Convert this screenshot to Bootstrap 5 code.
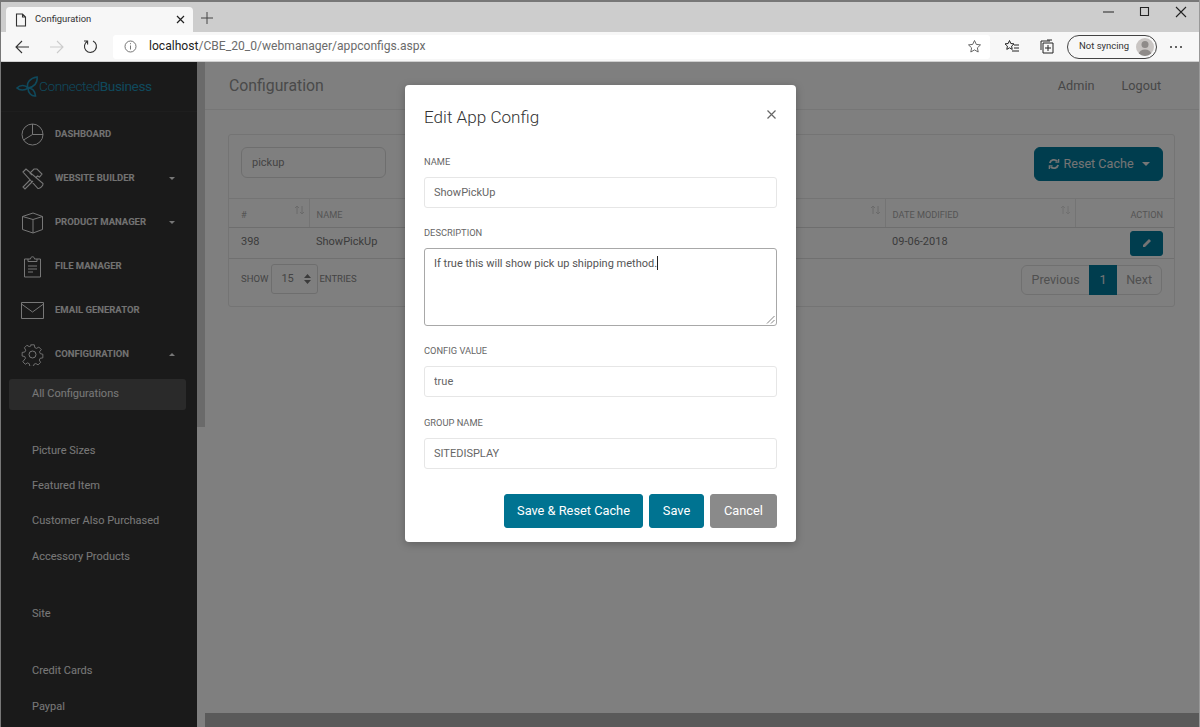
<!DOCTYPE html>
<html>
<head>
  <meta charset="utf-8">
  <meta name="viewport" content="width=device-width">
  <title>Configuration</title>
  <link href="https://cdn.jsdelivr.net/npm/bootstrap@5.3.3/dist/css/bootstrap.min.css" rel="stylesheet" type="text/css" />
  <style>
    html, body { height: 100%; overflow: hidden; }
    body { font-family: Roboto, "Liberation Sans", sans-serif; font-size: 11px; background: #fff; }
    .win { height: 727px; border-left: 1px solid #777; border-right: 1px solid #999; }

    /* browser frame */
    .tabstrip { height: 32px; background: #cdcdcd; border-top: 2px solid #777; padding: 5px 0 0 5px; }
    .tabitem { width: 187px; height: 25px; background: #f7f7f7; border-radius: 4px 4px 0 0; padding: 0 8px 0 9px; font-size: 9.4px; color: #333; }
    .tabplus { margin-left: 7px; }
    .winctl { gap: 22px; padding-right: 11px; margin-top: -2px; }
    .toolbar { height: 30px; background: #f7f7f7; padding: 0 0 0 14px; border-bottom: 1px solid #cfcfcf; }
    .navbtns { gap: 19px; width: 98px; }
    .addr { width: 877px; height: 24px; background: #fff; border-radius: 3px; padding: 0 8px 0 11px; font-size: 12.1px; }
    .addr b { font-weight: 400; color: #222; }
    .addr span { color: #6b6b6b; }
    .syncpill { width: 90px; height: 24px; border: 1px solid #444; border-radius: 12px; font-size: 9.5px; color: #333; padding: 0 2px 0 11px; margin-left: 12px; }
    .avatar { width: 18px; height: 18px; border-radius: 50%; background: #c9c5c3; overflow: hidden; }
    .favicon { margin-left: 14px; }
    .collicon { margin-left: 19px; }

    /* app under the backdrop */
    .appzone { height: 665px; }
    .sidepane { width: 196px; flex: none; background: #343434; color: #eee; }
    .brandrow { height: 50px; padding-left: 15px; border-bottom: 1px solid #3d3d3d; }
    .brandtxt { font-size: 13.7px; font-weight: 300; color: #1f93b9; letter-spacing: -.45px; }
    .brandtxt em { font-style: normal; font-weight: 400; }
    .menurow { height: 44px; padding: 0 22px 0 20px; font-size: 9.5px; font-weight: 700; color: #e4e4e4; text-transform: uppercase; }
    .menurow svg.mi { width: 23px; height: 23px; margin-right: 11px; flex: none; }
    .caretmark { width: 0; height: 0; border-left: 3px solid transparent; border-right: 3px solid transparent; border-top: 3px solid #eee; margin-left: auto; }
    .caretmark.up { border-top: 0; border-bottom: 3px solid #eee; }
    .caretbig { border-left-width: 4px; border-right-width: 4px; border-top-width: 4px; margin-left: 4px; }
    .subgroup { margin-bottom: 22px; }
    .subgroup.first { margin-bottom: 23.5px; }
    .subrow { height: 35.3px; padding-left: 31px; font-size: 11px; color: #f0f0f0; display: flex; align-items: center; }
    .subrow.current { margin: 3px 11px 0 8px; padding-left: 23px; height: 31px; background: #555; border-radius: 3px; }
    .scrolltrack { width: 8px; flex: none; background: #fff; }
    .scrollthumb { height: 365px; background: #d4d4d4; }
    .mainpane { background: #fff; min-width: 0; }
    .toprow { height: 48px; padding: 1px 38px 0 24px; border-bottom: 1px solid #ececec; color: #8e8e8e; font-size: 12.7px; flex: none; }
    .toprow h1 { font-size: 15.8px; font-weight: 400; margin: 0; color: #949494; }
    .topgap { gap: 27px; }
    .bodyzone { padding: 24px 24px 0 23px; }
    .sheet { height: 173px; border: 1px solid #e8e8e8; border-radius: 3px; background: #fff; }
    .sheettop { height: 63px; padding: 12px 11px 0 12px; }
    .searchbox { width: 145px; height: 31px; font-size: 11px; color: #888; border-color: #ddd; padding: 0 10px; background: #fff; }
    .btn-teal { background: #007a9c; border-color: #007a9c; color: #fff; }
    .resetbtn { width: 129px; height: 34px; font-size: 12.6px; padding: 0; color: #e8e8e8; }
    .datatable { table-layout: fixed; width: 100%; margin: 0; font-size: 11px; }
    .datatable th { height: 29px; font-size: 9.2px; font-weight: 400; color: #aaa; text-transform: uppercase; padding: 7px 7px 4px; border-right: 1px solid #e8e8e8; border-top: 1px solid #e8e8e8; border-bottom: 1px solid #ddd; position: relative; vertical-align: middle; }
    .datatable th:last-child { border-right: 0; text-align: right; padding-right: 11px; }
    .datatable td { height: 31px; padding: 0 7px 2px; color: #777; border-bottom: 1px solid #e0e0e0; vertical-align: middle; }
    .datatable td:first-child, .datatable th:first-child { padding-left: 12px; }
    .datatable td:last-child { padding: 0 11px 0 0; text-align: right; }
    .sorticon { position: absolute; right: 4px; top: 6px; }
    .editbtn { width: 33px; height: 25px; padding: 0; border-radius: 3px; display: inline-flex; align-items: center; justify-content: center; }
    .sheetfoot { height: 47px; padding: 5px 12px 0 12px; font-size: 9.5px; color: #888; }
    .sizepick { width: 47px; height: 30px; border: 1px solid #ddd; border-radius: 3px; font-size: 11px; color: #888; margin: 0 1px 0 3px; padding: 0 6px 0 9px; }
    .pager { margin-top: 1px !important; }
    .pager .page-link { height: 30px; font-size: 12.5px; color: #a0a0a0; background: #fff; border-color: #e0e0e0; padding: 0; line-height: 28px; text-align: center; border-radius: 0; }
    .pager .page-item.active .page-link { background: #007a9c; border-color: #007a9c; color: #e8e8e8; }
    .pager .pg-a { width: 69px; } .pager .pg-b { width: 28px; } .pager .pg-c { width: 46px; }
    .bottomstrip { height: 14px; background: #b4b4b4; flex: none; margin-top: auto; }
    .shade { position: absolute; inset: 0; background: rgba(0,0,0,.5); z-index: 10; }

    /* dialog */
    .dialogbox { position: absolute; z-index: 11; left: 404px; top: 23px; width: 391px; height: 457px; border: 0; border-radius: 4px; background: #fff; box-shadow: 0 2px 8px rgba(0,0,0,.25); padding: 0 19px; color: #555; }
    .dialoghead { height: 71px; padding-top: 19px; }
    .dialoghead h5 { font-size: 17.1px; font-weight: 300; color: #333; margin: 0; line-height: 26px; }
    .xmark { background: none; border: 0; padding: 0; margin: 6px 1px 0 0; line-height: 0; }
    .fieldlabel { display: block; font-size: 9.3px; color: #666; text-transform: uppercase; line-height: 12px; margin: 0 0 9px; }
    .fieldbox { height: 31px; font-size: 11px; color: #666; border: 1px solid #e6e6e6; border-radius: 3px; padding: 0 9px; box-shadow: none; }
    .fieldgap { margin-bottom: 19px; }
    .fieldgap.wide { margin-bottom: 20px; }
    .noteBox { position: relative; height: 78px; font-size: 11px; color: #555; border: 1px solid #a8a8a8; border-radius: 3px; padding: 7px 9px; line-height: 14px; }
    .gripmark { position: absolute; right: 1px; bottom: 1px; }
    .caretbar { display: inline-block; width: 1px; height: 14px; background: #222; vertical-align: -3px; }
    .footbtns { gap: 6px; margin-top: 25px; }
    .footbtns .btn { height: 34px; font-size: 12.8px; font-weight: 400; border-radius: 3px; padding: 0; }
    .btn-deep { background: #007391; border-color: #007391; color: #fff; }
    .btn-ash { background: #8a8a8a; border-color: #8a8a8a; color: #fff; }
  </style>
</head>
<body>
<div class="win d-flex flex-column">

  <div class="tabstrip d-flex align-items-start flex-none">
    <div class="tabitem d-flex align-items-center">
      <svg width="12" height="14" viewBox="0 0 12 14" fill="none" stroke="#333" stroke-width="1.1"><path d="M1.5 1h6l3 3v9h-9zM7.5 1v3h3"/></svg>
      <span class="ms-2">Configuration</span>
      <svg class="ms-auto" width="9" height="9" viewBox="0 0 9 9" stroke="#222" stroke-width="1.2"><path d="M1 1l7 7M8 1l-7 7"/></svg>
    </div>
    <svg class="tabplus mt-1" width="14" height="14" viewBox="0 0 14 14" stroke="#444" stroke-width="1"><path d="M7 1v12M1 7h12"/></svg>
    <div class="winctl d-flex align-items-center ms-auto">
      <svg width="14" height="14" viewBox="0 0 14 14" stroke="#333" stroke-width="1.1"><path d="M1 7h11"/></svg>
      <svg width="14" height="14" viewBox="0 0 14 14" fill="none" stroke="#222" stroke-width="1.1"><path d="M2.5 2.5h8v8h-8z"/></svg>
      <svg width="14" height="14" viewBox="0 0 14 14" stroke="#222" stroke-width="1.1"><path d="M2 2l10 10M12 2L2 12"/></svg>
    </div>
  </div>

  <div class="toolbar d-flex align-items-center">
    <div class="navbtns d-flex align-items-center">
      <svg width="15" height="14" viewBox="0 0 15 14" fill="none" stroke="#333" stroke-width="1.1"><path d="M14 7H1M7 1L1 7l6 6"/></svg>
      <svg width="15" height="14" viewBox="0 0 15 14" fill="none" stroke="#ccc" stroke-width="1.1"><path d="M1 7h13M8 1l6 6-6 6"/></svg>
      <svg width="15" height="15" viewBox="0 0 15 15" fill="none" stroke="#333" stroke-width="1.1"><path d="M4.5 2.2A6 6 0 1 0 10 2M4.6 5.5V2H1"/></svg>
    </div>
    <div class="addr d-flex align-items-center">
      <svg width="13" height="13" viewBox="0 0 13 13" fill="none" stroke="#666" stroke-width=".9"><circle cx="6.5" cy="6.5" r="5.5"/><path d="M6.5 5.5v4M6.5 3.2v1"/></svg>
      <div class="ms-2 ps-1"><b>localhost</b><span>/CBE_20_0/webmanager/appconfigs.aspx</span></div>
      <svg class="ms-auto" width="15" height="15" viewBox="0 0 15 15" fill="none" stroke="#555" stroke-width=".9"><path d="M7.5 1.5l1.8 3.9 4.2.5-3.1 2.9.8 4.2-3.7-2.1-3.7 2.1.8-4.2L1.5 5.9l4.2-.5z"/></svg>
    </div>
    <svg class="favicon" width="16" height="15" viewBox="0 0 16 15" fill="none" stroke="#222" stroke-width="1"><path d="M5.5 1.5l1.3 3 3.2.4-2.4 2.2.6 3.3-2.7-1.6-2.7 1.6.6-3.3L1 4.9l3.2-.4zM10 6h5M10 9h5M8 12h7"/></svg>
    <svg class="collicon" width="16" height="15" viewBox="0 0 16 15" fill="none" stroke="#222" stroke-width="1"><path d="M4 4h10v10H4zM2 11V2h9M8 1h5M6 9h6M9 6v6"/></svg>
    <div class="syncpill d-flex align-items-center justify-content-between">
      <span>Not syncing</span>
      <div class="avatar"><svg width="18" height="18" viewBox="0 0 18 18" fill="#8f8b89"><circle cx="9" cy="6.5" r="3.5"/><ellipse cx="9" cy="15.5" rx="6" ry="4"/></svg></div>
    </div>
    <svg class="ms-auto me-3" width="14" height="4" viewBox="0 0 14 4" fill="#333"><circle cx="2" cy="2" r="1"/><circle cx="7" cy="2" r="1"/><circle cx="12" cy="2" r="1"/></svg>
  </div>

  <div class="appzone d-flex position-relative overflow-hidden">
    <aside class="sidepane overflow-hidden">
      <div class="brandrow d-flex align-items-center">
        <svg width="23" height="21" viewBox="0 0 23 21" fill="none" stroke="#1f93b9" stroke-width="1.6"><path d="M1 12c3-3 8-3.5 11 0-3 2.5-8 3-11 0zM12 12C10 7 14 2 21 1c1 6-3 10-9 11zM12 12c4 0 7 3 7.5 8-4 .5-7.5-3-7.5-8z"/></svg>
        <span class="brandtxt">Connected<em>Business</em></span>
      </div>
      <div class="menurow d-flex align-items-center">
        <svg class="mi" viewBox="0 0 23 23" fill="none" stroke="#eee" stroke-width="1"><circle cx="11.5" cy="11.5" r="10.5"/><path d="M11.5 1v10.5L2.5 17M11.5 11.5H22"/></svg>DASHBOARD
      </div>
      <div class="menurow d-flex align-items-center">
        <svg class="mi" viewBox="0 0 23 23" fill="none" stroke="#eee" stroke-width="1.1"><path d="M2 5l3-3 17 14.5c.5 2-3 5.5-5 5zM9.5 12.5L2 20l2 2 8-8M11 8L9 6l4-4h3l5 5-2.5 3-2-1-2 2"/></svg>WEBSITE BUILDER<i class="caretmark"></i>
      </div>
      <div class="menurow d-flex align-items-center">
        <svg class="mi" viewBox="0 0 23 23" fill="none" stroke="#eee" stroke-width="1"><path d="M1.5 5.5L12 2l9.5 3.5v13L12 22 1.5 18.5zM1.5 5.5L12 8.500l9.500-3M12 8.500V22"/></svg>PRODUCT MANAGER<i class="caretmark"></i>
      </div>
      <div class="menurow d-flex align-items-center">
        <svg class="mi" viewBox="0 0 23 23" fill="none" stroke="#eee" stroke-width="1"><path d="M7 4H3.5v18h16V4H16M7 6.5V4h2.5c0-3 4-3 4 0H16v2.500zM7 11h9M7 14h9M7 17h5"/></svg>FILE MANAGER
      </div>
      <div class="menurow d-flex align-items-center">
        <svg class="mi" viewBox="0 0 23 23" fill="none" stroke="#eee" stroke-width="1"><path d="M.5 3.5h22v16H.5zM.5 5l11 8 11-8"/></svg>EMAIL GENERATOR
      </div>
      <div class="menurow d-flex align-items-center">
        <svg class="mi" viewBox="0 0 23 23" fill="none" stroke="#eee" stroke-width="1"><circle cx="11.5" cy="11.5" r="3.5"/><path d="M9.5 1h4l.5 3 2 1 2.500-1.500 2.800 2.800L19.300 8.800l.8 2 2.900.7v4l-3 .5-1 2 1.500 2.500-2.800 2.800-2.500-1.500-2 .8-.7 2.400h-4l-.5-2.900-2-1-2.500 1.500-2.800-2.800L3.700 16l-.8-2L0 13.500v-4l3-.5 1-2L2.500 4.300l2.800-2.800L7.800 3l2-.8z" transform="translate(1.150 .9) scale(.9)"/></svg>CONFIGURATION<i class="caretmark up"></i>
      </div>
      <div class="subgroup first"><div class="subrow current">All Configurations</div></div>
      <div class="subgroup">
        <div class="subrow">Picture Sizes</div>
        <div class="subrow">Featured Item</div>
        <div class="subrow">Customer Also Purchased</div>
        <div class="subrow">Accessory Products</div>
      </div>
      <div class="subgroup"><div class="subrow">Site</div></div>
      <div class="subgroup">
        <div class="subrow">Credit Cards</div>
        <div class="subrow">Paypal</div>
      </div>
    </aside>
    <div class="scrolltrack"><div class="scrollthumb"></div></div>

    <main class="mainpane flex-grow-1 d-flex flex-column">
      <div class="toprow d-flex align-items-center justify-content-between">
        <h1>Configuration</h1>
        <div class="d-flex topgap"><span>Admin</span><span>Logout</span></div>
      </div>
      <div class="bodyzone">
        <div class="sheet">
          <div class="sheettop d-flex justify-content-between align-items-start">
            <input class="form-control searchbox" value="pickup">
            <button class="btn btn-teal resetbtn d-flex align-items-center justify-content-center gap-1" type="button">
              <svg width="12" height="12" viewBox="0 0 13 13" fill="none" stroke="#e8e8e8" stroke-width="2"><path d="M2 5.5a4.7 4.7 0 0 1 8-2M11 7.5a4.7 4.7 0 0 1-8 2"/><path d="M11.5 1v3.5H8M1.5 12V8.500H5" stroke-width="1.5"/></svg>
              <span>Reset Cache</span><i class="caretmark caretbig"></i>
            </button>
          </div>
          <table class="datatable">
            <colgroup><col style="width:80px"><col><col style="width:190px"><col style="width:99px"></colgroup>
            <thead>
              <tr>
                <th>#<svg class="sorticon" width="11" height="10" viewBox="0 0 11 10" fill="none" stroke="#d4d4d4"><path d="M3 9V1M1 3l2-2 2 2M8 1v8M6 7l2 2 2-2"/></svg></th>
                <th>Name<svg class="sorticon" width="11" height="10" viewBox="0 0 11 10" fill="none" stroke="#d4d4d4"><path d="M3 9V1M1 3l2-2 2 2M8 1v8M6 7l2 2 2-2"/></svg></th>
                <th>Date Modified<svg class="sorticon" width="11" height="10" viewBox="0 0 11 10" fill="none" stroke="#e0e0e0"><path d="M3 9V1M1 3l2-2 2 2M8 1v8M6 7l2 2 2-2"/></svg></th>
                <th>Action</th>
              </tr>
            </thead>
            <tbody>
              <tr>
                <td>398</td><td>ShowPickUp</td><td>09-06-2018</td>
                <td><button class="btn btn-teal editbtn" type="button"><svg width="10" height="10" viewBox="0 0 10 10" fill="#e8e8e8"><path d="M7 1l2 2-6 6H1V7z"/></svg></button></td>
              </tr>
            </tbody>
          </table>
          <div class="sheetfoot d-flex justify-content-between align-items-start">
            <div class="d-flex align-items-center">
              <span>SHOW</span>
              <div class="sizepick d-flex align-items-center justify-content-between">
                <span>15</span>
                <svg width="7" height="10" viewBox="0 0 7 10" fill="#777"><path d="M3.5 0L7 4H0zM3.5 10L0 6h7z"/></svg>
              </div>
              <span>ENTRIES</span>
            </div>
            <ul class="pagination pager m-0">
              <li class="page-item disabled"><a class="page-link pg-a" href="#">Previous</a></li>
              <li class="page-item active"><a class="page-link pg-b" href="#">1</a></li>
              <li class="page-item"><a class="page-link pg-c" href="#">Next</a></li>
            </ul>
          </div>
        </div>
      </div>
      <div class="bottomstrip"></div>
    </main>

    <div class="shade"></div>

    <div class="modal-content dialogbox">
      <div class="dialoghead d-flex justify-content-between align-items-start">
        <h5>Edit App Config</h5>
        <button class="xmark" type="button" aria-label="Close"><svg width="9" height="9" viewBox="0 0 9 9" stroke="#666" stroke-width="1.2"><path d="M.5.5l8 8M8.5.5l-8 8"/></svg></button>
      </div>
      <form>
        <div class="fieldgap">
          <label class="fieldlabel">Name</label>
          <input class="form-control fieldbox" value="ShowPickUp">
        </div>
        <div class="fieldgap">
          <label class="fieldlabel">Description</label>
          <div class="form-control noteBox">If true this will show pick up shipping method.<span class="caretbar"></span>
            <svg class="gripmark" width="9" height="9" viewBox="0 0 9 9" stroke="#777" stroke-width=".9"><path d="M8.5 1L1 8.5M8.5 5L5 8.5"/></svg>
          </div>
        </div>
        <div class="fieldgap wide">
          <label class="fieldlabel">Config Value</label>
          <input class="form-control fieldbox" value="true">
        </div>
        <div>
          <label class="fieldlabel">Group Name</label>
          <input class="form-control fieldbox" value="SITEDISPLAY">
        </div>
        <div class="footbtns d-flex justify-content-end">
          <button class="btn btn-deep" style="width:139px" type="button">Save &amp; Reset Cache</button>
          <button class="btn btn-deep" style="width:55px" type="button">Save</button>
          <button class="btn btn-ash" style="width:67px" type="button">Cancel</button>
        </div>
      </form>
    </div>
  </div>
</div>
<script src="https://cdn.jsdelivr.net/npm/bootstrap@5.3.3/dist/js/bootstrap.bundle.min.js"></script>
</body>
</html>
